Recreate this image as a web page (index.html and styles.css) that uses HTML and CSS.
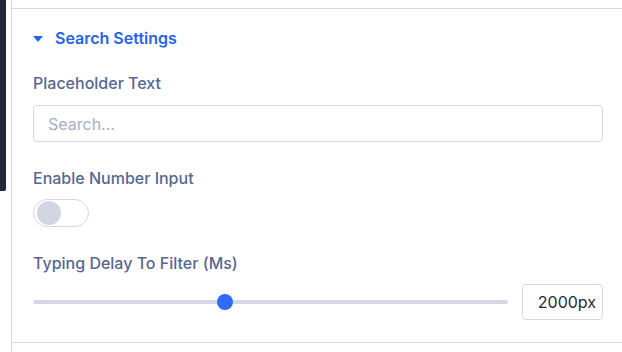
FILE: index.html
```html
<!DOCTYPE html>
<html>
<head>
<meta charset="utf-8">
<link rel="stylesheet" href="styles.css">
</head>
<body>
<div class="app">
  <div class="rail"><div class="rail-bar"></div></div>
  <div class="panel">
    <div class="prev"></div>
    <section class="section">
      <div class="section-head">
        <svg class="caret" width="10" height="6" viewBox="0 0 10 6"><path d="M0 0 H10 L5 6 Z" fill="#2563eb"/></svg>
        <span>Search Settings</span>
      </div>
      <div class="field field-first">
        <label class="label">Placeholder Text</label>
        <div class="input"><span class="placeholder">Search...</span></div>
      </div>
      <div class="field">
        <label class="label">Enable Number Input</label>
        <div class="toggle"><div class="knob"></div></div>
      </div>
      <div class="field">
        <label class="label">Typing Delay To Filter (Ms)</label>
        <div class="slider-row">
          <div class="slider">
            <div class="track"></div>
            <div class="thumb"></div>
          </div>
          <div class="number">2000px</div>
        </div>
      </div>
    </section>
  </div>
</div>
</body>
</html>
```

FILE: styles.css
```css
* { box-sizing: border-box; }
html, body { margin: 0; padding: 0; background: #ffffff; }
body { font-family: Inter, "Noto Sans", sans-serif; width: 622px; height: 352px; overflow: hidden; }
.app { display: flex; height: 352px; }
.rail { width: 11px; flex: none; }
.rail-bar { width: 6px; height: 191px; background: #1f2937; border-bottom-right-radius: 2px; }
.panel { flex: 1; border-left: 1px solid #d4d8e4; display: flex; flex-direction: column; }
.prev { height: 9px; border-bottom: 1px solid #d4d8e4; flex: none; }
.section { padding: 19px 19px 22px 21px; border-bottom: 1px solid #d4d8e4; display: flex; flex-direction: column; }
.section-head { display: flex; align-items: center; height: 20px; color: #2563eb; font-size: 16px; font-weight: 600; }
.caret { margin-right: 12px; margin-top: 1px; }
.field { display: flex; flex-direction: column; }
.field-first { margin-top: 25px; }
.label { font-size: 16px; line-height: 20px; color: #56688f; font-weight: 500; }
.input { margin-top: 12px; height: 37px; border: 1px solid #d4d8e4; border-radius: 4px; display: flex; align-items: center; padding-left: 14px; }
.placeholder { color: #a4adc6; font-size: 16px; }
.field + .field { margin-top: 26px; }
.toggle { margin-top: 11px; width: 56px; height: 28px; border: 1px solid #d4d8e4; border-radius: 14px; padding: 1px 3px; display: flex; align-items: center; }
.knob { width: 24px; height: 24px; border-radius: 50%; background: #d1d6e2; }
.slider-row { margin-top: 11px; display: flex; align-items: center; height: 36px; gap: 14px; }
.slider { position: relative; flex: 1; height: 16px; display: flex; align-items: center; }
.track { width: 100%; height: 4px; border-radius: 2px; background: #d4d8e4; }
.thumb { position: absolute; left: 184px; top: 0; width: 16px; height: 16px; border-radius: 50%; background: #2f6bff; }
.number { width: 81px; height: 36px; border: 1px solid #d4d8e4; border-radius: 4px; display: flex; align-items: center; justify-content: flex-end; padding-right: 6px; font-size: 16px; color: #1f2937; }
```
